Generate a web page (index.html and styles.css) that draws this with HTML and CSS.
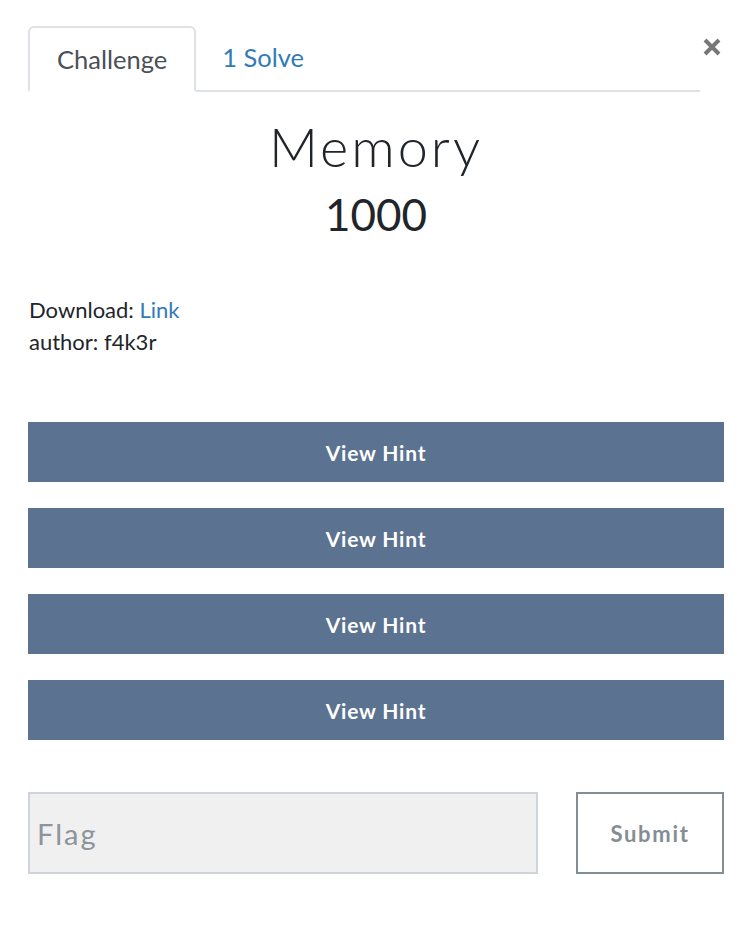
FILE: index.html
```html
<!DOCTYPE html>
<html>
<head>
<meta charset="utf-8">
<link rel="stylesheet" href="styles.css">
</head>
<body>
<div class="modal">
  <div class="tabs-row">
    <ul class="tabs">
      <li class="tab active">Challenge</li>
      <li class="tab link">1 Solve</li>
    </ul>
    <span class="close"><svg width="18" height="18" viewBox="0 0 18 18"><path d="M2 2 L16 16 M16 2 L2 16" stroke="#777" stroke-width="4" stroke-linecap="butt"/></svg></span>
  </div>
  <h2 class="name">Memory</h2>
  <h3 class="value">1000</h3>
  <div class="desc">
    <p>Download: <a class="lnk">Link</a><br>author: f4k3r</p>
  </div>
  <div class="hints">
    <button class="hint">View Hint</button>
    <button class="hint">View Hint</button>
    <button class="hint">View Hint</button>
    <button class="hint">View Hint</button>
  </div>
  <div class="submit-row">
    <input class="flag" type="text" placeholder="Flag">
    <button class="submit">Submit</button>
  </div>
</div>
</body>
</html>
```
FILE: styles.css
```css
* { box-sizing: border-box; }
html, body { margin: 0; padding: 0; background: #fff; }
body { font-family: Lato, "Open Sans", sans-serif; color: #212529; }
.modal { padding: 26px 30px 0 28px; }
.tabs-row { display: flex; align-items: flex-start; }
.tabs { list-style: none; margin: 0; padding: 0; display: flex; flex: 1; border-bottom: 2px solid #dee2e6; height: 66px; }
.tab { font-size: 25.5px; line-height: 30px; padding: 16px 27px 18px; }
.tab.active { color: #495057; border: 2px solid #dee2e6; border-bottom-color: #fff; border-radius: 6px 6px 0 0; margin-bottom: -2px; height: 66px; }
.tab.link { color: #337ab7; padding-left: 26px; }
.close { width: 24px; display: flex; justify-content: center; margin-top: 12px; }
.close svg { display: block; }
.name { text-align: center; font-weight: 300; font-size: 54px; letter-spacing: 3px; margin: 25px 0 0; line-height: 60px; color: #212529; }
.value { text-align: center; font-weight: 400; font-size: 44px; margin: 9px 0 0; line-height: 56px; }
.desc { margin-top: 52px; font-size: 22px; line-height: 32px; padding-left: 1px; }
.desc p { margin: 0; }
.lnk { color: #337ab7; }
.hints { margin-top: 64px; display: flex; flex-direction: column; gap: 26px; }
.hint { height: 60px; background: #5b7290; color: #fff; border: none; font-family: Lato, sans-serif; font-weight: bold; font-size: 21px; letter-spacing: 0.8px; width: 100%; }
.submit-row { display: flex; margin-top: 52px; gap: 38px; }
.flag { width: 510px; height: 82px; background: #f0f0f0; border: 2px solid #cfd4da; font-family: Lato, sans-serif; font-size: 29px; letter-spacing: 2px; padding: 0 7px; }
.flag::placeholder { color: #8d959c; }
.submit { width: 148px; height: 82px; background: #fff; border: 2px solid #858d94; color: #858d94; font-family: Lato, sans-serif; font-weight: bold; font-size: 22px; letter-spacing: 1.7px; }
```
